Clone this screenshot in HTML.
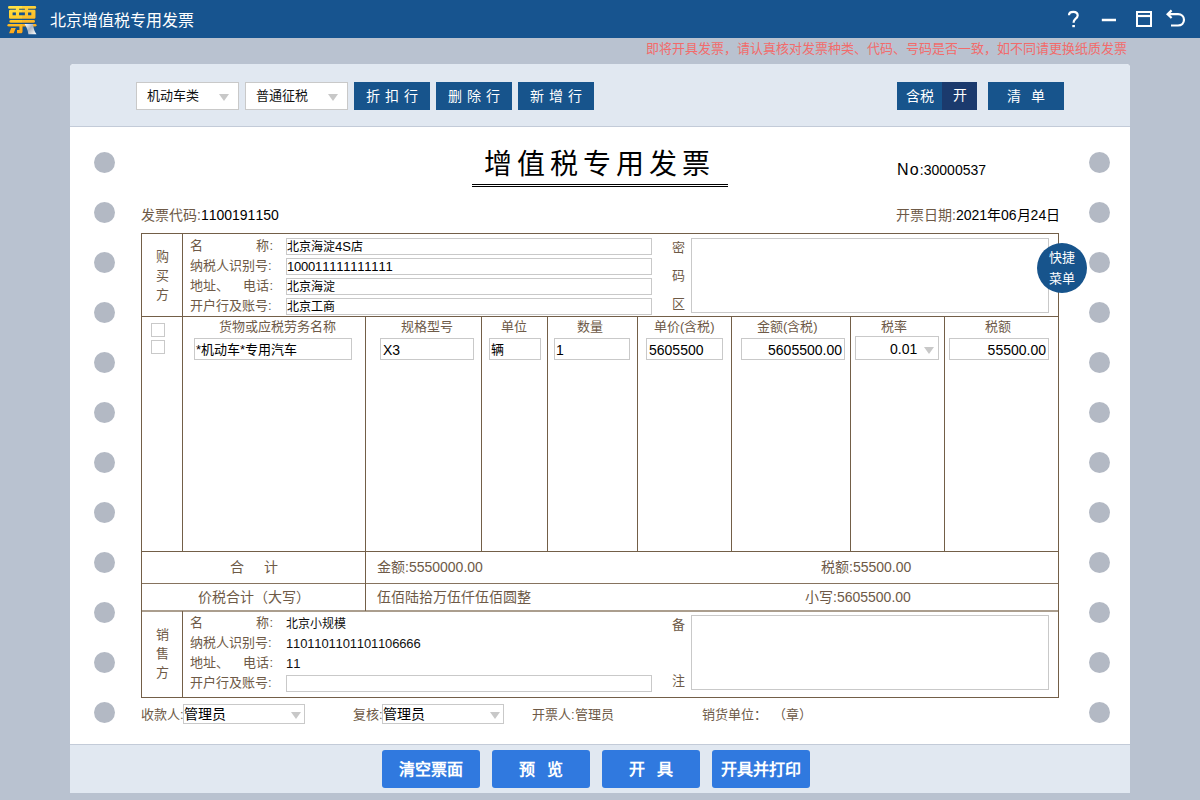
<!DOCTYPE html>
<html lang="zh-CN"><head><meta charset="utf-8">
<style>
*{box-sizing:border-box;margin:0;padding:0}
html,body{width:1200px;height:800px;overflow:hidden;background:#b9c2d0;font-family:"Liberation Sans",sans-serif;font-kerning:none}
.c12{font-size:12px}
.a{position:absolute;white-space:nowrap}
.tri{position:absolute;width:0;height:0;border-left:5px solid transparent;border-right:5px solid transparent;border-top:7px solid #c8c8c8}
.btn{position:absolute;background:#17548c;color:#fff;font-size:14px;text-align:center;line-height:28px;height:28px;top:82px}
.dot{position:absolute;width:21px;height:21px;border-radius:50%;background:#b3b9c4}
.hl{position:absolute;height:1px;background:#735f48}
.vl{position:absolute;width:1px;background:#735f48}
.lb{color:#6e5a47;font-size:13px;line-height:20px}
.inp{position:absolute;border:1px solid #c9c9c9;background:#fff;overflow:hidden;white-space:nowrap;color:#000}
.bbtn{position:absolute;top:750px;width:98px;height:38px;background:#3079df;border-radius:3px;color:#fff;font-weight:bold;font-size:16px;line-height:40px;text-align:center}
.row{position:absolute;width:83px;display:flex;justify-content:space-between}
</style></head><body>
<div class="a" style="left:0;top:0;width:1200px;height:38px;background:#17548f"></div>
<svg class="a" style="left:4px;top:2px" width="36" height="36" viewBox="4 2 36 36">
<defs>
<linearGradient id="gy" gradientUnits="userSpaceOnUse" x1="0" y1="6" x2="0" y2="34"><stop offset="0" stop-color="#ffe447"/><stop offset="0.5" stop-color="#ffc928"/><stop offset="1" stop-color="#ffa51a"/></linearGradient>
<linearGradient id="go" gradientUnits="userSpaceOnUse" x1="0" y1="6" x2="0" y2="34"><stop offset="0" stop-color="#fdd23a"/><stop offset="0.5" stop-color="#fbb827"/><stop offset="1" stop-color="#f7a01a"/></linearGradient>
<linearGradient id="gp" gradientUnits="userSpaceOnUse" x1="25" y1="24" x2="36" y2="34"><stop offset="0" stop-color="#ffffff"/><stop offset="0.45" stop-color="#a9b2bf"/><stop offset="1" stop-color="#ffffff"/></linearGradient>
<clipPath id="cl"><rect x="0" y="0" width="22" height="40"/></clipPath>
<clipPath id="cr"><rect x="22" y="0" width="20" height="40"/></clipPath>
</defs>
<g fill="#0d3a70" transform="translate(0.3,0.4)" opacity="0.6">
<rect x="8" y="6.1" width="28.2" height="2.7" rx="1.35"/>
<rect x="15.9" y="8" width="3.2" height="2.5"/>
<rect x="24.9" y="8" width="3.2" height="2.5"/>
<path fill-rule="evenodd" d="M10.2 9.8 H34.3 Q35.5 9.8 35.5 11 V17.6 Q35.5 18.8 34.3 18.8 H10.2 Q9 18.8 9 17.6 V11 Q9 9.8 10.2 9.8 Z M12.6 12.6 V15.2 H15.9 V12.6 Z M19.1 12.6 V15.2 H24.9 V12.6 Z M28.1 12.6 V15.2 H31.3 V12.6 Z"/>
<rect x="9.4" y="20.1" width="25.6" height="2.7" rx="1.35"/>
<rect x="7.4" y="23.9" width="29.2" height="2.7" rx="1.35"/>
<path d="M19.4 26 H22.6 V31.6 Q22.6 33.2 21 33.2 H17 V30 H19.4 Z"/>
<path d="M11.2 28 H15.8 L13.7 33.2 H9.1 Z"/>
</g>
<g fill="url(#gy)" clip-path="url(#cl)">
<rect x="8" y="6.1" width="28.2" height="2.7" rx="1.35"/>
<rect x="15.9" y="8" width="3.2" height="2.5"/>
<rect x="24.9" y="8" width="3.2" height="2.5"/>
<path fill-rule="evenodd" d="M10.2 9.8 H34.3 Q35.5 9.8 35.5 11 V17.6 Q35.5 18.8 34.3 18.8 H10.2 Q9 18.8 9 17.6 V11 Q9 9.8 10.2 9.8 Z M12.6 12.6 V15.2 H15.9 V12.6 Z M19.1 12.6 V15.2 H24.9 V12.6 Z M28.1 12.6 V15.2 H31.3 V12.6 Z"/>
<rect x="9.4" y="20.1" width="25.6" height="2.7" rx="1.35"/>
<rect x="7.4" y="23.9" width="29.2" height="2.7" rx="1.35"/>
<path d="M19.4 26 H22.6 V31.6 Q22.6 33.2 21 33.2 H17 V30 H19.4 Z"/>
<path d="M11.2 28 H15.8 L13.7 33.2 H9.1 Z"/>
</g>
<g fill="url(#go)" clip-path="url(#cr)">
<rect x="8" y="6.1" width="28.2" height="2.7" rx="1.35"/>
<rect x="15.9" y="8" width="3.2" height="2.5"/>
<rect x="24.9" y="8" width="3.2" height="2.5"/>
<path fill-rule="evenodd" d="M10.2 9.8 H34.3 Q35.5 9.8 35.5 11 V17.6 Q35.5 18.8 34.3 18.8 H10.2 Q9 18.8 9 17.6 V11 Q9 9.8 10.2 9.8 Z M12.6 12.6 V15.2 H15.9 V12.6 Z M19.1 12.6 V15.2 H24.9 V12.6 Z M28.1 12.6 V15.2 H31.3 V12.6 Z"/>
<rect x="9.4" y="20.1" width="25.6" height="2.7" rx="1.35"/>
<rect x="7.4" y="23.9" width="29.2" height="2.7" rx="1.35"/>
<path d="M19.4 26 H22.6 V31.6 Q22.6 33.2 21 33.2 H17 V30 H19.4 Z"/>
<path d="M11.2 28 H15.8 L13.7 33.2 H9.1 Z"/>
</g>
<path d="M24.6 24 H33 Q33.6 30.5 36.5 34.3 H28.4 Q28 31 26.9 28.5 Q26 26 24.6 24 Z" fill="url(#gp)"/>
</svg>
<div class="a" style="left:50px;top:2px;line-height:38px;font-size:16px;color:#fff">北京增值税专用发票</div>
<svg class="a" style="left:1064px;top:8px" width="126" height="22" viewBox="0 0 126 22" fill="none" stroke="#fff" stroke-width="2.2">
<path d="M5 7.2 C5 4.8 6.8 3.9 9.3 3.9 C11.9 3.9 13.7 5.4 13.7 7.5 C13.7 9.4 12.3 10.4 11.1 11.3 C10 12.2 9.6 13 9.6 14.8"/>
<rect x="8.3" y="17" width="2.6" height="2.2" fill="#fff" stroke="none"/>
<path d="M37.8 12 L52 12" stroke-width="2.5"/>
<rect x="73" y="4" width="14" height="14" stroke-width="2"/>
<path d="M73 8 L87 8" stroke-width="2.2"/>
<path d="M107.6 2.4 L103.6 6.2 L107.6 10 M103.6 6.2 L114 6.2 C117.5 6.2 120 8.7 120 11.85 C120 15 117.5 17.5 114 17.5 L107 17.5"/>
</svg>
<div class="a" style="left:646px;top:40px;line-height:18px;font-size:13px;color:#f26b6b">即将开具发票，请认真核对发票种类、代码、号码是否一致，如不同请更换纸质发票</div>
<div class="a" style="left:70px;top:64px;width:1060px;height:729px;background:#fff;border-radius:4px 4px 0 0"></div>
<div class="a" style="left:70px;top:64px;width:1060px;height:63px;background:#e1e8f1;border-bottom:1px solid #c3cbd8;border-radius:4px 4px 0 0"></div>
<div class="a" style="left:70px;top:744px;width:1060px;height:49px;background:#e1e8f1;border-top:1px solid #c3cbd8"></div>
<div class="a inp" style="left:136px;top:82px;width:103px;height:28px;line-height:26px;padding-left:10px;font-size:13px;color:#111">机动车类<span class="tri" style="left:82px;top:11px"></span></div>
<div class="a inp" style="left:245px;top:82px;width:103px;height:28px;line-height:26px;padding-left:10px;font-size:13px;color:#111">普通征税<span class="tri" style="left:82px;top:11px"></span></div>
<div class="btn" style="left:354px;width:76px;letter-spacing:5px;padding-left:5px">折扣行</div>
<div class="btn" style="left:436px;width:76px;letter-spacing:5px;padding-left:5px">删除行</div>
<div class="btn" style="left:518px;width:76px;letter-spacing:5px;padding-left:5px">新增行</div>
<div class="btn" style="left:897px;width:45px">含税</div>
<div class="btn" style="left:942px;width:35px;background:#1b3a6d;line-height:26px">开</div>
<div class="btn" style="left:988px;width:76px;letter-spacing:10px;padding-left:10px">清单</div>
<div class="dot" style="left:94px;top:152px"></div>
<div class="dot" style="left:1089px;top:152px"></div>
<div class="dot" style="left:94px;top:202px"></div>
<div class="dot" style="left:1089px;top:202px"></div>
<div class="dot" style="left:94px;top:252px"></div>
<div class="dot" style="left:1089px;top:252px"></div>
<div class="dot" style="left:94px;top:302px"></div>
<div class="dot" style="left:1089px;top:302px"></div>
<div class="dot" style="left:94px;top:352px"></div>
<div class="dot" style="left:1089px;top:352px"></div>
<div class="dot" style="left:94px;top:402px"></div>
<div class="dot" style="left:1089px;top:402px"></div>
<div class="dot" style="left:94px;top:452px"></div>
<div class="dot" style="left:1089px;top:452px"></div>
<div class="dot" style="left:94px;top:502px"></div>
<div class="dot" style="left:1089px;top:502px"></div>
<div class="dot" style="left:94px;top:552px"></div>
<div class="dot" style="left:1089px;top:552px"></div>
<div class="dot" style="left:94px;top:602px"></div>
<div class="dot" style="left:1089px;top:602px"></div>
<div class="dot" style="left:94px;top:652px"></div>
<div class="dot" style="left:1089px;top:652px"></div>
<div class="dot" style="left:94px;top:702px"></div>
<div class="dot" style="left:1089px;top:702px"></div>
<div class="a" style="left:484px;top:146px;font-size:28px;line-height:38px;letter-spacing:5px;color:#000">增值税专用发票</div>
<div class="a" style="left:472px;top:184px;width:256px;height:3px;border-top:1px solid #000;border-bottom:1px solid #000"></div>
<div class="a" style="left:897px;top:160px;line-height:20px;color:#000"><span style="font-size:16px;letter-spacing:1.2px">No</span><span style="font-size:14px">:30000537</span></div>
<div class="a" style="left:141px;top:205px;line-height:20px;font-size:14px;color:#000"><span style="color:#6e5a47">发票代码:</span>1100191150</div>
<div class="a" style="left:896px;top:205px;line-height:20px;font-size:14px;color:#000"><span style="color:#6e5a47">开票日期:</span>2021年06月24日</div>
<div class="hl" style="left:141px;top:233px;width:918px"></div>
<div class="hl" style="left:141px;top:316px;width:918px"></div>
<div class="hl" style="left:141px;top:551px;width:918px"></div>
<div class="hl" style="left:141px;top:697px;width:918px"></div>
<div class="hl" style="left:141px;top:583px;width:918px;background:#86735e"></div>
<div class="hl" style="left:141px;top:610px;width:918px;height:2px;background:#ab9e8e"></div>
<div class="vl" style="left:141px;top:233px;height:465px"></div>
<div class="vl" style="left:1058px;top:233px;height:465px"></div>
<div class="vl" style="left:182px;top:233px;height:319px"></div>
<div class="vl" style="left:182px;top:611px;height:87px"></div>
<div class="vl" style="left:365px;top:316px;height:295px"></div>
<div class="vl" style="left:481px;top:316px;height:236px"></div>
<div class="vl" style="left:547px;top:316px;height:236px"></div>
<div class="vl" style="left:637px;top:316px;height:236px"></div>
<div class="vl" style="left:731px;top:316px;height:236px"></div>
<div class="vl" style="left:850px;top:316px;height:236px"></div>
<div class="vl" style="left:944px;top:316px;height:236px"></div>
<div class="a lb" style="left:155px;top:247px;width:14px;line-height:19px;white-space:normal;text-align:center">购<br>买<br>方</div>
<div class="row lb" style="left:190px;top:236px"><span>名</span><span>称:</span></div>
<div class="a lb" style="left:190px;top:256px">纳税人识别号:</div>
<div class="row lb" style="left:190px;top:276px"><span>地址、</span><span>电话:</span></div>
<div class="a lb" style="left:190px;top:296px">开户行及账号:</div>
<div class="inp" style="left:286px;top:238px;width:366px;height:17px;font-size:13px;line-height:15px"><span class="c12">北京海淀</span>4S<span class="c12">店</span></div>
<div class="inp" style="left:286px;top:258px;width:366px;height:17px;font-size:13px;line-height:15px"><span style="letter-spacing:-0.2px">100011111111111</span></div>
<div class="inp" style="left:286px;top:278px;width:366px;height:17px;font-size:13px;line-height:15px"><span class="c12">北京海淀</span></div>
<div class="inp" style="left:286px;top:298px;width:366px;height:17px;font-size:13px;line-height:15px"><span class="c12">北京工商</span></div>
<div class="a lb" style="left:672px;top:234px;width:14px;line-height:28px;white-space:normal">密<br>码<br>区</div>
<div class="inp" style="left:691px;top:238px;width:358px;height:75px"></div>
<div class="inp" style="left:151px;top:323px;width:14px;height:14px"></div>
<div class="inp" style="left:151px;top:340px;width:14px;height:14px"></div>
<div class="a lb" style="left:219px;top:317px">货物或应税劳务名称</div>
<div class="a lb" style="left:401px;top:317px">规格型号</div>
<div class="a lb" style="left:501px;top:317px">单位</div>
<div class="a lb" style="left:577px;top:317px">数量</div>
<div class="a lb" style="left:654px;top:317px">单价(含税)</div>
<div class="a lb" style="left:757px;top:317px">金额(含税)</div>
<div class="a lb" style="left:881px;top:317px">税率</div>
<div class="a lb" style="left:985px;top:317px">税额</div>
<div class="inp" style="left:194px;top:338px;width:158px;height:22px;font-size:13px;line-height:20px;padding:1px 0 0 1px">*机动车*专用汽车</div>
<div class="inp" style="left:380px;top:338px;width:94px;height:22px;font-size:14px;line-height:20px;padding:1px 0 0 2px">X3</div>
<div class="inp" style="left:489px;top:338px;width:52px;height:22px;font-size:13px;line-height:20px;padding:1px 0 0 1px">辆</div>
<div class="inp" style="left:554px;top:338px;width:76px;height:22px;font-size:14px;line-height:20px;padding:1px 0 0 1px">1</div>
<div class="inp" style="left:646px;top:338px;width:77px;height:22px;font-size:14px;line-height:20px;padding:1px 0 0 2px">5605500</div>
<div class="inp" style="left:741px;top:338px;width:104px;height:22px;font-size:14px;line-height:20px;text-align:right;padding:1px 2px 0 0">5605500.00</div>
<div class="inp" style="left:855px;top:336px;width:84px;height:24px;font-size:14px;line-height:22px;padding:1px 0 0 34px">0.01<span class="tri" style="left:68px;top:10px"></span></div>
<div class="inp" style="left:949px;top:338px;width:100px;height:22px;font-size:14px;line-height:20px;text-align:right;padding:1px 2px 0 0">55500.00</div>
<div class="a lb" style="left:230px;top:557px;font-size:14px">合</div>
<div class="a lb" style="left:264px;top:557px;font-size:14px">计</div>
<div class="a lb" style="left:377px;top:557px;font-size:14px">金额:5550000.00</div>
<div class="a lb" style="left:821px;top:557px;font-size:14px">税额:55500.00</div>
<div class="a lb" style="left:198px;top:587px;font-size:14px">价税合计（大写）</div>
<div class="a lb" style="left:377px;top:587px;font-size:14px">伍佰陆拾万伍仟伍佰圆整</div>
<div class="a lb" style="left:805px;top:587px;font-size:14px">小写:5605500.00</div>
<div class="a lb" style="left:155px;top:625px;width:14px;line-height:19px;white-space:normal;text-align:center">销<br>售<br>方</div>
<div class="row lb" style="left:190px;top:613px"><span>名</span><span>称:</span></div>
<div class="a lb" style="left:190px;top:633px">纳税人识别号:</div>
<div class="row lb" style="left:190px;top:653px"><span>地址、</span><span>电话:</span></div>
<div class="a lb" style="left:190px;top:673px">开户行及账号:</div>
<div class="a" style="left:286px;top:614px;line-height:20px;font-size:13px;color:#111;white-space:pre"><span class="c12">北京小规模</span>
<span style="letter-spacing:-0.15px">1101101101101106666</span>
11</div>
<div class="inp" style="left:286px;top:675px;width:366px;height:17px"></div>
<div class="a lb" style="left:672px;top:615px">备</div>
<div class="a lb" style="left:672px;top:671px">注</div>
<div class="inp" style="left:691px;top:615px;width:358px;height:75px"></div>
<div class="a lb" style="left:141px;top:705px">收款人:</div>
<div class="inp" style="left:183px;top:704px;width:122px;height:20px;font-size:14px;line-height:18px">管理员<span class="tri" style="left:107px;top:7px"></span></div>
<div class="a lb" style="left:353px;top:705px">复核:</div>
<div class="inp" style="left:382px;top:704px;width:122px;height:20px;font-size:14px;line-height:18px">管理员<span class="tri" style="left:107px;top:7px"></span></div>
<div class="a lb" style="left:532px;top:705px">开票人:管理员</div>
<div class="a lb" style="left:702px;top:705px">销货单位：</div>
<div class="a lb" style="left:773px;top:705px">（章）</div>
<div class="a" style="left:1037px;top:243px;width:50px;height:50px;border-radius:50%;background:#17548c;color:#fff;font-size:13px;line-height:21px;text-align:center;padding-top:4px;white-space:normal">快捷<br>菜单</div>
<div class="bbtn" style="left:382px">清空票面</div>
<div class="bbtn" style="left:492px;letter-spacing:12px;padding-left:12px">预览</div>
<div class="bbtn" style="left:602px;letter-spacing:12px;padding-left:12px">开具</div>
<div class="bbtn" style="left:712px">开具并打印</div>
</body></html>
